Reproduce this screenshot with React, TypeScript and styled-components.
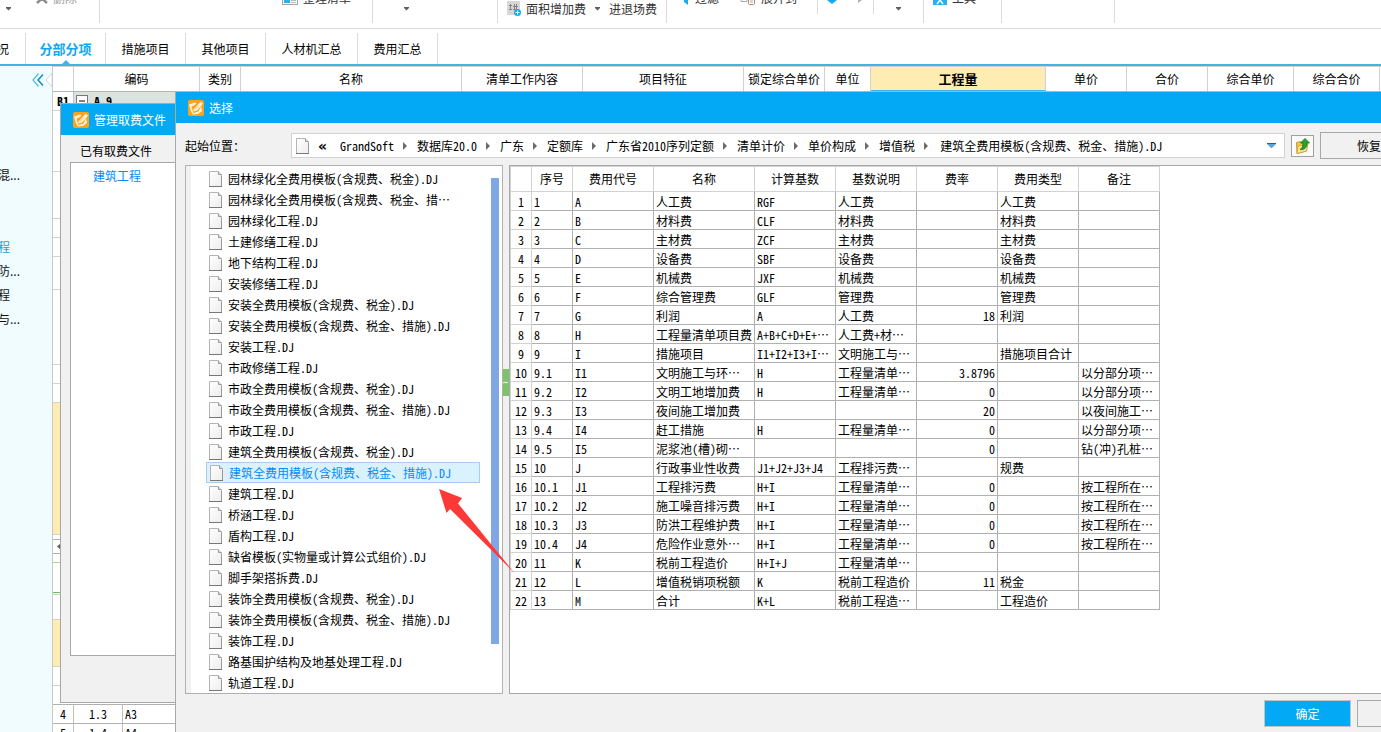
import React from "react";
import styled, { createGlobalStyle } from "styled-components";

const blue = "#03a9f4";

const GlobalStyle = createGlobalStyle`
  * { box-sizing: border-box; }
  body {
    margin: 0;
    overflow: hidden;
    background: #fff;
    color: #000;
    font: 12px/18px "Noto Sans Mono CJK SC", "Noto Sans CJK SC", "Liberation Mono", monospace;
  }
  button, a { font: inherit; color: inherit; text-decoration: none; }
  button { padding: 0; margin: 0; border: 0; background: none; white-space: nowrap; }
  ul { list-style: none; margin: 0; padding: 0; }
  svg { display: block; flex: none; }
`;

/* ---------- main window ---------- */

const Window = styled.div`
  position: relative;
  display: flex;
  flex-direction: column;
  height: 100vh;
  overflow: hidden;
  white-space: nowrap;
`;

const Toolbar = styled.div`
  display: flex;
  flex: none;
  height: 29px;
  overflow: hidden;
  border-bottom: 1px solid #dcdcdc;
  color: #333;
  font-family: "Noto Sans CJK SC", sans-serif;
  line-height: 16px;
`;

const ToolGroup = styled.div<{ $width: number; $indent: number; $short?: boolean }>`
  display: flex;
  flex: none;
  align-items: flex-start;
  width: ${(p) => p.$width}px;
  height: ${(p) => (p.$short ? 14 : 23)}px;
  padding-left: ${(p) => p.$indent}px;
  border-right: 1px solid #dcdcdc;
`;

const Tool = styled.button<{ $lower?: boolean; $before?: number; $dim?: boolean }>`
  display: flex;
  align-items: center;
  gap: 5px;
  height: 16px;
  line-height: 16px;
  margin-top: ${(p) => (p.$lower ? 1 : -10)}px;
  margin-left: ${(p) => p.$before ?? 0}px;
  color: ${(p) => (p.$dim ? "#999" : "#333")};
`;

const Tabs = styled.nav`
  display: flex;
  flex: none;
  height: 37px;
  padding-top: 4px;
  border-bottom: 2px solid #41b4e6;
`;

const Tab = styled.button<{ $width: number; $active?: boolean; $cut?: boolean }>`
  position: relative;
  display: flex;
  flex: none;
  align-items: center;
  justify-content: ${(p) => (p.$cut ? "flex-end" : "center")};
  width: ${(p) => p.$width}px;
  padding-right: ${(p) => (p.$cut ? 16 : 0)}px;
  border-right: 1px solid #dcdcdc;
  font-family: "Noto Sans CJK SC", sans-serif;
  font-size: ${(p) => (p.$active ? 13 : 12)}px;
  font-weight: ${(p) => (p.$active ? 700 : 400)};
  color: ${(p) => (p.$active ? "#0fa8ec" : "#000")};
  svg { position: absolute; bottom: 0; left: 50%; margin-left: -4px; }
`;

const Workspace = styled.div`
  display: flex;
  flex: 1;
  min-height: 0;
`;

const SidePanel = styled.aside`
  display: flex;
  flex-direction: column;
  flex: none;
  width: 52px;
  background: #f0fcff;
  font-family: "Noto Sans CJK SC", sans-serif;
`;

const Collapse = styled.button`
  display: flex;
  gap: 1px;
  align-self: flex-end;
  height: 97px;
  padding-top: 7px;
`;

const SideItem = styled.li<{ $active?: boolean }>`
  height: 24px;
  margin-left: -2px;
  line-height: 24px;
  color: ${(p) => (p.$active ? "#12a5dc" : "#111")};
`;

const Sheet = styled.main`
  display: flex;
  flex-direction: column;
  flex: 1;
  min-width: 0;
  border-left: 1px solid #c8c8c8;
`;

const SheetHeader = styled.div`
  display: flex;
  flex: none;
  height: 26px;
  border-top: 1px solid #d2d2d2;
  border-bottom: 1px solid #b4b4b4;
`;

const SheetColumn = styled.div<{ $width: number; $active?: boolean }>`
  flex: none;
  width: ${(p) => p.$width}px;
  border-right: 1px solid #d2d2d2;
  border-bottom: ${(p) => (p.$active ? "1px solid #41b4e6" : "0")};
  background: ${(p) => (p.$active ? "#ffecb3" : "#fff")};
  font-family: "Noto Sans CJK SC", sans-serif;
  font-size: ${(p) => (p.$active ? 13 : 12)}px;
  font-weight: ${(p) => (p.$active ? 700 : 400)};
  line-height: 24px;
  text-align: center;
`;

const SheetRow = styled.div<{ $height: number; $fill?: string; $line?: string }>`
  display: flex;
  flex: none;
  height: ${(p) => p.$height}px;
  border-bottom: 1px solid ${(p) => p.$line ?? "#d2d2d2"};
  background: ${(p) => p.$fill ?? "#fff"};
`;

const SheetCell = styled.div<{ $width: number; $fill?: string; $left?: boolean; $bold?: boolean }>`
  display: flex;
  align-items: center;
  flex: none;
  gap: 6px;
  width: ${(p) => p.$width}px;
  padding-left: ${(p) => (p.$left ? 2 : 0)}px;
  justify-content: ${(p) => (p.$left ? "flex-start" : "center")};
  border-right: 1px solid #c0c0c0;
  background: ${(p) => p.$fill ?? "#fff"};
  font-weight: ${(p) => (p.$bold ? 700 : 400)};
`;

/* ---------- dialogs ---------- */

const Dialog = styled.section`
  position: absolute;
  display: flex;
  flex-direction: column;
  background: #f1f1f1;
`;

const ManageDialog = styled(Dialog)`
  left: 60px;
  top: 103px;
  bottom: 29px;
  width: 320px;
  border: 1px solid #a8a8a8;
`;

const SelectDialog = styled(Dialog)`
  left: 175px;
  right: -70px;
  top: 92px;
  bottom: 0;
  border-left: 1px solid #a8a8a8;
`;

const TitleBar = styled.header`
  display: flex;
  flex: none;
  align-items: center;
  gap: 5px;
  height: 31px;
  padding-left: 12px;
  background: ${blue};
  color: #fff;
`;

const ManageLabel = styled.div`
  flex: none;
  height: 27px;
  padding: 7px 0 0 19px;
`;

const ManageList = styled.ul`
  flex: 1;
  margin: 0 9px 46px;
  padding: 4px 22px;
  border: 1px solid #a8a8a8;
  background: #fff;
  color: #078bf8;
`;

const LocationRow = styled.div`
  display: flex;
  flex: none;
  align-items: center;
  height: 42px;
  padding: 3px 6px 0 9px;
`;

const LocationLabel = styled.span`
  width: 106px;
`;

const AddressBar = styled.div`
  display: flex;
  flex: 1;
  align-items: center;
  height: 25px;
  padding: 0 8px 0 4px;
  border: 1px solid #d2d2d2;
  background: #fff;
`;

const Crumbs = styled.nav`
  display: flex;
  flex: 1;
  align-items: center;
  margin-left: 9px;
  a + svg, svg + a { margin-left: 9px; }
  svg + a:last-child { margin-left: 11px; }
`;

const Earlier = styled.a`
  width: 22px;
  font-family: "DejaVu Sans", sans-serif;
  font-size: 14px;
  font-weight: 700;
`;

const UpButton = styled.button`
  display: flex;
  align-items: center;
  justify-content: center;
  width: 23px;
  height: 22px;
  margin: 0 6px;
  border: 1px solid #a0a0a0;
  background: #fafafa;
`;

const RestoreButton = styled.button`
  width: 125px;
  height: 27px;
  padding-left: 36px;
  border: 1px solid #a8a8a8;
  text-align: left;
`;

const Panels = styled.div`
  display: flex;
  flex: 1;
  min-height: 0;
  padding: 0 7px 0 9px;
`;

const FilePanel = styled.div`
  display: flex;
  flex: none;
  width: 318px;
  overflow: hidden;
  border: 1px solid #b0b0b0;
  background: linear-gradient(to right, #f1f1f1 5px, #fff 5px);
`;

const FileList = styled.ul`
  flex: none;
  width: 274px;
  margin-left: 20px;
  padding-top: 2px;
`;

const FileItem = styled.li<{ $selected?: boolean }>`
  display: flex;
  align-items: center;
  gap: 6px;
  height: 21px;
  padding-left: ${(p) => (p.$selected ? 3 : 2)}px;
  border: 1px solid ${(p) => (p.$selected ? "#a9cdee" : "transparent")};
  background: ${(p) => (p.$selected ? "#d9f2fd" : "none")};
  color: ${(p) => (p.$selected ? "#078bf8" : "#000")};
`;

const ScrollThumb = styled.div`
  width: 8px;
  margin: 12px 0 49px 11px;
  background: #7fa7e5;
`;

const Splitter = styled.div`
  display: flex;
  align-items: center;
  flex: none;
  width: 6px;
  padding-bottom: 94px;
`;

const SplitterHandle = styled.button`
  display: flex;
  align-items: center;
  width: 6px;
  height: 27px;
  background: #7cc36a;
`;

const TablePanel = styled.div`
  flex: 1;
  min-width: 0;
  border: 1px solid #a8a8a8;
  background: #fff;
`;

const Table = styled.table`
  width: 650px;
  table-layout: fixed;
  border-collapse: separate;
  border-spacing: 0;
  line-height: 16px;
  th { padding: 0; font-weight: 400; border: 0 solid #d2d2d2; border-width: 0 1px 1px 0; }
  th:first-child { border-left-width: 1px; }
  thead th { height: 26px; border-top-width: 1px; font-family: "Noto Sans CJK SC", sans-serif; }
  tbody th { padding-top: 2px; }
`;

const Cell = styled.td<{ $number?: boolean }>`
  height: 19px;
  padding: 2px 2px 0;
  overflow: hidden;
  border: 0 solid #b0b0b0;
  border-width: 0 1px 1px 0;
  text-align: ${(p) => (p.$number ? "right" : "left")};
`;

const Footer = styled.footer`
  display: flex;
  flex: none;
  justify-content: flex-end;
  gap: 6px;
  height: 38px;
  padding: 6px 7px 5px;
`;

const DialogButton = styled.button<{ $primary?: boolean }>`
  width: 87px;
  height: 27px;
  border: 1px solid ${(p) => (p.$primary ? "#c4c4c4" : "#a8a8a8")};
  background: ${(p) => (p.$primary ? blue : "#f1f1f1")};
  color: #fff;
`;

const PointerArrow = styled.svg`
  position: absolute;
  left: 439px;
  top: 489px;
`;

/* ---------- icons ---------- */

const Caret = () => (
  <svg width="7" height="4" viewBox="0 0 7 4"><path d="M1 0h5v1L3.500 3.500 1 1z" fill="#5c5f66" /></svg>
);

const AppIcon = () => (
  <svg width="16" height="16" viewBox="0 0 16 16">
    <rect width="16" height="16" rx="2" fill="#fba31c" />
    <path d="M1 4.500L7 2.500l1.500 1L6 5.500 3.500 6.500l1 4 1 2.500 5-1.500L13 6l1 5-4 3-5 .5-2-3z" fill="#fff3d6" />
    <path d="M5.500 9.500L12.500 2l2.500 1.500-6 7-3.500 1z" fill="#fffaf0" />
    <path d="M5 8l3-3M7 9.500l4-4" fill="none" stroke="#f5a531" strokeWidth=".8" />
  </svg>
);

const FileIcon = () => (
  <svg width="13" height="16" viewBox="0 0 13 16">
    <defs>
      <linearGradient id="sheet" x1="0" y1="0" x2="1" y2="1">
        <stop offset="0" stopColor="#fff" />
        <stop offset="1" stopColor="#ededed" />
      </linearGradient>
    </defs>
    <path d="M.5.5h8.500l3.500 3.500v11.500H.5z" fill="url(#sheet)" stroke="#b4b4b4" />
    <path d="M9.500.5v3h3M12.500 5v10.500" fill="none" stroke="#999" />
    <path d="M0 15.500h13" stroke="#777" />
  </svg>
);

const CrumbArrow = () => (
  <svg width="5" height="8" viewBox="0 0 5 8"><path d="M0 0l4 4L0 8z" fill="#6a6a6a" /></svg>
);

const ChevronsIcon = () => (
  <svg width="12" height="14" viewBox="0 0 12 14">
    <path d="M6.500.5L1 7l5.500 6.500" fill="none" stroke="#4fbbd9" strokeWidth="1.200" />
    <path d="M11 1.500L6 7l5 5.500" fill="none" stroke="#0f94bd" strokeWidth="1.600" />
  </svg>
);

const NotchIcon = () => (
  <svg width="7" height="14" viewBox="0 0 7 14">
    <path d="M7 0L1 7l6 7z" fill="#fff" stroke="#cfd9dc" />
  </svg>
);

const FolderUpIcon = () => (
  <svg width="14" height="16" viewBox="0 0 14 16">
    <path d="M.5 4.500l4-1 1 1.500 5-1v9l-9.500 2.500z" fill="#f2c84b" stroke="#c79a2a" />
    <path d="M2 8l10-2-1.500 7-9.500 2.500z" fill="#fbe596" stroke="#d2a63a" />
    <path d="M9 .5L4.500 5h2.500c0 3.500-.5 5-3 6.500 4 .5 7-1.500 7-6.500h2.500z" fill="#27a52b" stroke="#10701a" strokeWidth=".8" />
  </svg>
);

const AreaFeeIcon = () => (
  <svg width="14" height="16" viewBox="0 0 14 16">
    <rect width="13" height="14" rx="1" fill="#d7d7d7" />
    <path d="M2 4.500h3M2 8.500h3M3.500 3v6M6 5.500h5M6 8.500h5M7.500 3v6M9.500 3v6" stroke="#848484" />
    <circle cx="10.500" cy="11.500" r="3.500" fill="#18aee8" />
    <path d="M8.500 11.500h4M10.500 9.500v4" stroke="#fff" />
  </svg>
);

const ListIcon = () => (
  <svg width="16" height="16" viewBox="0 0 16 16">
    <rect x=".5" y=".5" width="15" height="14" fill="#fff" stroke="#a5a5a5" />
    <path d="M2 11.500h6" stroke="#22b5ee" strokeWidth="3" />
    <path d="M9 10.500h5M9 12.500h5" stroke="#b8b8b8" />
  </svg>
);

const DeleteIcon = () => (
  <svg width="12" height="16" viewBox="0 0 12 16"><path d="M1 4l10 9M11 4L1 13" stroke="#8c8c8c" strokeWidth="2.500" /></svg>
);

const FilterIcon = () => (
  <svg width="9" height="16" viewBox="0 0 9 16"><path d="M0 4h9L7 9v6l-4-3V9z" fill="#18aee8" /></svg>
);

const ExpandIcon = () => (
  <svg width="16" height="16" viewBox="0 0 16 16">
    <path d="M1 6h6v5.500H1z" fill="none" stroke="#aaa" />
    <rect x="8.500" y="6.500" width="6" height="8" rx="1" fill="#fff" stroke="#a08d82" />
    <path d="M10 10h3M10 12h3" stroke="#c4a58c" />
  </svg>
);

const ToolsIcon = () => (
  <svg width="14" height="16" viewBox="0 0 14 16">
    <rect width="14" height="15" fill="#25b2ea" />
    <path d="M4 14l3-4 3 4M5 7l2 3 2-3" stroke="#fff" strokeWidth="1.500" fill="none" />
  </svg>
);

/* ---------- data ---------- */

const files = [
  "园林绿化全费用模板(含规费、税金).DJ", "园林绿化全费用模板(含规费、税金、措…", "园林绿化工程.DJ", "土建修缮工程.DJ",
  "地下结构工程.DJ", "安装修缮工程.DJ", "安装全费用模板(含规费、税金).DJ", "安装全费用模板(含规费、税金、措施).DJ",
  "安装工程.DJ", "市政修缮工程.DJ", "市政全费用模板(含规费、税金).DJ", "市政全费用模板(含规费、税金、措施).DJ",
  "市政工程.DJ", "建筑全费用模板(含规费、税金).DJ", "建筑全费用模板(含规费、税金、措施).DJ", "建筑工程.DJ",
  "桥涵工程.DJ", "盾构工程.DJ", "缺省模板(实物量或计算公式组价).DJ", "脚手架搭拆费.DJ",
  "装饰全费用模板(含规费、税金).DJ", "装饰全费用模板(含规费、税金、措施).DJ", "装饰工程.DJ",
  "路基围护结构及地基处理工程.DJ", "轨道工程.DJ",
];
const selectedFile = "建筑全费用模板(含规费、税金、措施).DJ";

const crumbs = ["GrandSoft", "数据库20.0", "广东", "定额库", "广东省2010序列定额", "清单计价", "单价构成", "增值税", selectedFile];

const columns: [string, number][] = [
  ["", 22], ["序号", 41], ["费用代号", 81], ["名称", 101], ["计算基数", 81],
  ["基数说明", 81], ["费率", 81], ["费用类型", 81], ["备注", 81],
];

const fees: string[][] = [
  ["1", "A", "人工费", "RGF", "人工费", "", "人工费", ""],
  ["2", "B", "材料费", "CLF", "材料费", "", "材料费", ""],
  ["3", "C", "主材费", "ZCF", "主材费", "", "主材费", ""],
  ["4", "D", "设备费", "SBF", "设备费", "", "设备费", ""],
  ["5", "E", "机械费", "JXF", "机械费", "", "机械费", ""],
  ["6", "F", "综合管理费", "GLF", "管理费", "", "管理费", ""],
  ["7", "G", "利润", "A", "人工费", "18", "利润", ""],
  ["8", "H", "工程量清单项目费", "A+B+C+D+E+⋯", "人工费+材…", "", "", ""],
  ["9", "I", "措施项目", "I1+I2+I3+I⋯", "文明施工与…", "", "措施项目合计", ""],
  ["9.1", "I1", "文明施工与环…", "H", "工程量清单…", "3.8796", "", "以分部分项…"],
  ["9.2", "I2", "文明工地增加费", "H", "工程量清单…", "0", "", "以分部分项…"],
  ["9.3", "I3", "夜间施工增加费", "", "", "20", "", "以夜间施工…"],
  ["9.4", "I4", "赶工措施", "H", "工程量清单…", "0", "", "以分部分项…"],
  ["9.5", "I5", "泥浆池(槽)砌…", "", "", "0", "", "钻(冲)孔桩…"],
  ["10", "J", "行政事业性收费", "J1+J2+J3+J4", "工程排污费…", "", "规费", ""],
  ["10.1", "J1", "工程排污费", "H+I", "工程量清单…", "0", "", "按工程所在…"],
  ["10.2", "J2", "施工噪音排污费", "H+I", "工程量清单…", "0", "", "按工程所在…"],
  ["10.3", "J3", "防洪工程维护费", "H+I", "工程量清单…", "0", "", "按工程所在…"],
  ["10.4", "J4", "危险作业意外…", "H+I", "工程量清单…", "0", "", "按工程所在…"],
  ["11", "K", "税前工程造价", "H+I+J", "工程量清单…", "", "", ""],
  ["12", "L", "增值税销项税额", "K", "税前工程造价", "11", "税金", ""],
  ["13", "M", "合计", "K+L", "税前工程造…", "", "工程造价", ""],
];

const sheetColumns: [string, number][] = [
  ["", 21], ["编码", 126], ["类别", 41], ["名称", 221], ["清单工作内容", 121], ["项目特征", 161],
  ["锁定综合单价", 81], ["单位", 46], ["工程量", 175], ["单价", 81], ["合价", 81], ["综合单价", 86], ["综合合价", 86],
];

const sideItems = ["混...", "", "", "程", "防...", "程", "与..."];

const hiddenRows: { height: number; fill?: string; line?: string }[] = [
  { height: 61 }, { height: 47 }, { height: 19 }, { height: 19 }, { height: 33 }, { height: 75 },
  { height: 19 }, { height: 19 }, { height: 132, fill: "#ffecb3" }, { height: 5, line: "#b0b0b0" },
];

const lowerRows: { height: number; fill?: string; line?: string }[] = [
  { height: 9, line: "#a5dc8c" }, { height: 30, line: "#6cc05a" }, { height: 2 }, { height: 25 },
  { height: 47, fill: "#ffecb3" }, { height: 19 }, { height: 19, line: "#b0b0b0" },
];

/* ---------- page ---------- */

const MainToolbar = () => (
  <Toolbar>
    <ToolGroup $width={100} $indent={5}>
      <Tool $lower aria-label="更多"><Caret /></Tool>
      <Tool $dim $before={24}><DeleteIcon />删除</Tool>
    </ToolGroup>
    <ToolGroup $width={273} $indent={182}><Tool><ListIcon />整理清单</Tool></ToolGroup>
    <ToolGroup $width={125} $indent={30}><Tool $lower aria-label="更多"><Caret /></Tool></ToolGroup>
    <ToolGroup $width={169} $indent={9}>
      <Tool $lower><AreaFeeIcon />面积增加费</Tool>
      <Tool $lower $before={8} aria-label="更多"><Caret /></Tool>
      <Tool $lower $before={8}>进退场费</Tool>
    </ToolGroup>
    <ToolGroup $width={151} $indent={14} $short>
      <Tool><FilterIcon />过滤</Tool>
      <Tool $before={21}><ExpandIcon />展开到</Tool>
    </ToolGroup>
    <ToolGroup $width={56} $indent={9} $short>
      <svg width="36" height="5" viewBox="0 0 36 5">
        <path d="M0 0h10L5 4z" fill="#11aaf0" /><path d="M31 0h4l-4 3z" fill="#b0b0b0" />
      </svg>
    </ToolGroup>
    <ToolGroup $width={50} $indent={21}><Tool $lower aria-label="更多"><Caret /></Tool></ToolGroup>
    <ToolGroup $width={78} $indent={9}><Tool><ToolsIcon />工具</Tool></ToolGroup>
    <ToolGroup $width={113} $indent={0} />
  </Toolbar>
);

export default function App() {
  return (
    <Window lang="zh-CN">
      <GlobalStyle />
      <MainToolbar />
      <Tabs>
        <Tab $width={26} $cut>况</Tab>
        <Tab $width={80} $active>
          分部分项
          <svg width="8" height="4" viewBox="0 0 8 4"><path d="M0 4l4-4 4 4z" fill="#41b4e6" /></svg>
        </Tab>
        <Tab $width={80}>措施项目</Tab>
        <Tab $width={80}>其他项目</Tab>
        <Tab $width={92}>人材机汇总</Tab>
        <Tab $width={80}>费用汇总</Tab>
      </Tabs>
      <Workspace>
        <SidePanel>
          <Collapse aria-label="收起"><ChevronsIcon /><NotchIcon /></Collapse>
          <ul>
            {sideItems.map((label, i) => <SideItem key={i} $active={i === 3}>{label}</SideItem>)}
          </ul>
        </SidePanel>
        <Sheet>
          <SheetHeader>
            {sheetColumns.map(([label, width]) => (
              <SheetColumn key={label} $width={width} $active={label === "工程量"}>{label}</SheetColumn>
            ))}
          </SheetHeader>
          <SheetRow $height={19} $fill="#dbe3de">
            <SheetCell $width={21} $bold>B1</SheetCell>
            <SheetCell $width={126} $fill="#dbe3de" $left $bold>
              <svg width="12" height="12" viewBox="0 0 12 12">
                <rect x=".5" y=".5" width="11" height="11" fill="#fff" stroke="#777" /><path d="M3 6h6" stroke="#000" />
              </svg>
              A.9
            </SheetCell>
          </SheetRow>
          {hiddenRows.map((r, i) => <SheetRow key={i} $height={r.height} $fill={r.fill} $line={r.line} />)}
          <SheetRow $height={14} $line="#b0b0b0">
            <svg width="10" height="13" viewBox="0 0 10 13"><path d="M8 3v7L4 6.500z" fill="#5c5f66" /></svg>
          </SheetRow>
          {lowerRows.map((r, i) => <SheetRow key={i} $height={r.height} $fill={r.fill} $line={r.line} />)}
          <SheetRow $height={19} $line="#b0b0b0">
            <SheetCell $width={21}>4</SheetCell><SheetCell $width={49}>1.3</SheetCell><SheetCell $width={80} $left>A3</SheetCell>
          </SheetRow>
          <SheetRow $height={19} $line="#b0b0b0">
            <SheetCell $width={21}>5</SheetCell><SheetCell $width={49}>1.4</SheetCell><SheetCell $width={80} $left>A4</SheetCell>
          </SheetRow>
        </Sheet>
      </Workspace>

      <ManageDialog>
        <TitleBar><AppIcon />管理取费文件</TitleBar>
        <ManageLabel>已有取费文件</ManageLabel>
        <ManageList><li>建筑工程</li></ManageList>
      </ManageDialog>

      <SelectDialog>
        <TitleBar><AppIcon />选择</TitleBar>
        <LocationRow>
          <LocationLabel>起始位置：</LocationLabel>
          <AddressBar>
            <FileIcon />
            <Crumbs>
              <Earlier href="#">«</Earlier>
              {crumbs.map((name, i) => (
                <React.Fragment key={name}>
                  {i > 0 && <CrumbArrow />}
                  <a href="#">{name}</a>
                </React.Fragment>
              ))}
            </Crumbs>
            <button aria-label="展开位置">
              <svg width="9" height="5" viewBox="0 0 9 5"><path d="M0 0h9v1L5 5H4L0 1z" fill="#5aa6dc" /><path d="M0 .5h9" stroke="#2a5f92" /></svg>
            </button>
          </AddressBar>
          <UpButton aria-label="上一级"><FolderUpIcon /></UpButton>
          <RestoreButton>恢复</RestoreButton>
        </LocationRow>
        <Panels>
          <FilePanel>
            <FileList>
              {files.map((name) => (
                <FileItem key={name} $selected={name === selectedFile}><FileIcon />{name}</FileItem>
              ))}
            </FileList>
            <ScrollThumb />
          </FilePanel>
          <Splitter>
            <SplitterHandle aria-label="收起列表">
              <svg width="6" height="3" viewBox="0 0 6 3"><path d="M0 2l2-1 1 1 2-1" fill="none" stroke="#fff" /></svg>
            </SplitterHandle>
          </Splitter>
          <TablePanel>
            <Table>
              <colgroup>{columns.map(([label, width]) => <col key={label} width={width} />)}</colgroup>
              <thead>
                <tr>{columns.map(([label]) => <th key={label} scope="col">{label}</th>)}</tr>
              </thead>
              <tbody>
                {fees.map((row, i) => (
                  <tr key={i}>
                    <th scope="row">{i + 1}</th>
                    {row.map((value, c) => <Cell key={c} $number={c === 5}>{value}</Cell>)}
                  </tr>
                ))}
              </tbody>
            </Table>
          </TablePanel>
        </Panels>
        <Footer>
          <DialogButton $primary>确定</DialogButton>
          <DialogButton aria-label="取消" />
        </Footer>
      </SelectDialog>

      <PointerArrow width="76" height="85" viewBox="0 0 76 85" aria-hidden="true">
        <path d="M0 0l23 9-4 5.500L75.500 84 11 20l-3.500 4z" fill="#fc3936" />
      </PointerArrow>
    </Window>
  );
}
